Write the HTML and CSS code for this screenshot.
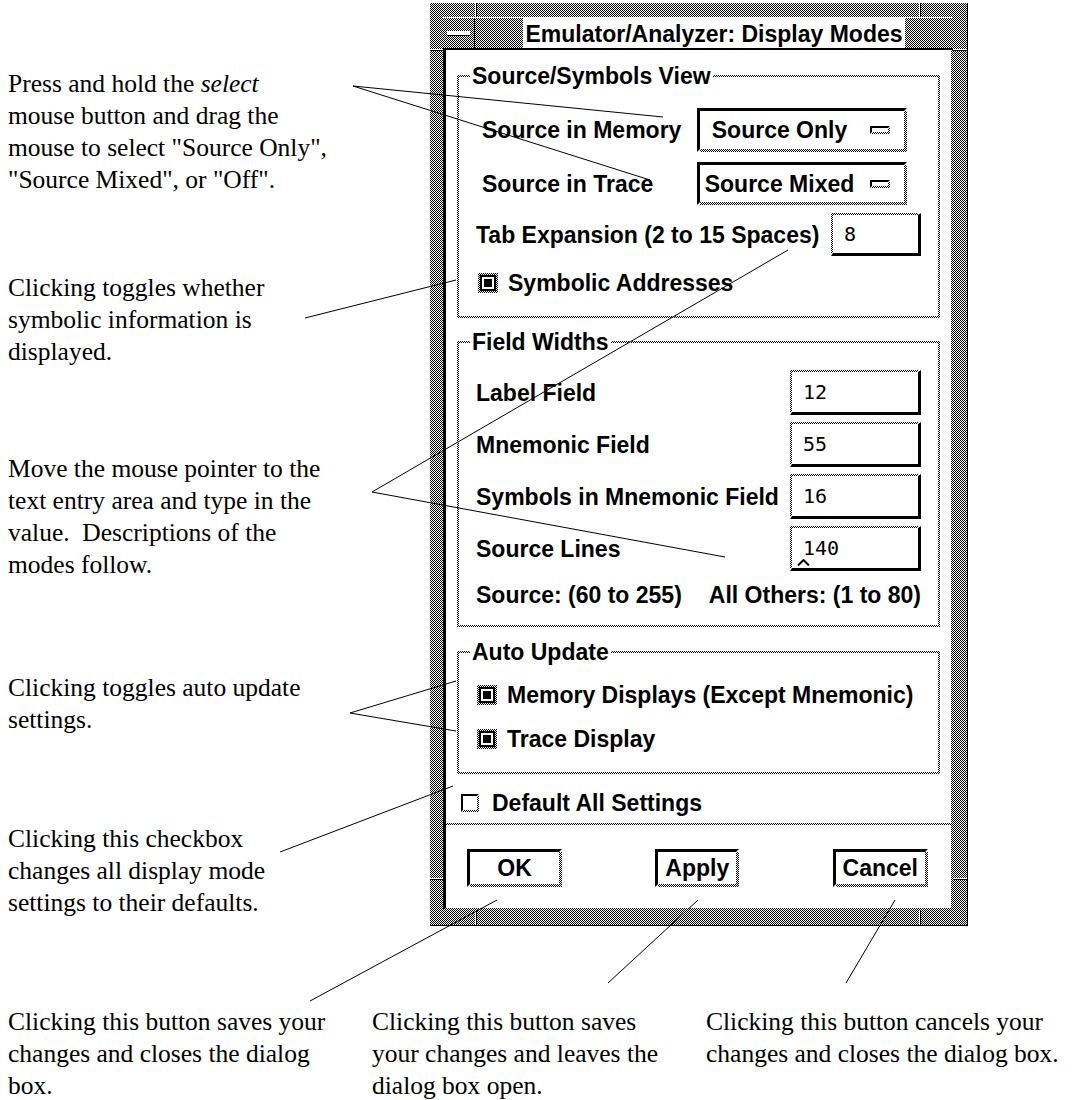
FILE: index.html
```html
<!DOCTYPE html>
<html>
  <head>
    <meta http-equiv="Content-Type" content="text/html; charset=utf-8">
    <title>Emulator/Analyzer: Display Modes</title>
    <link rel="stylesheet" href="styles.css">
  </head>
  <body>
    <div class="page">
      <p class="note note-select">Press and hold the <i>select</i><br>mouse button and drag the<br>mouse to select "Source Only",<br>"Source Mixed", or "Off".</p>
      <p class="note note-symbolic">Clicking toggles whether<br>symbolic information is<br>displayed.</p>
      <p class="note note-entry">Move the mouse pointer to the<br>text entry area and type in the<br>value.&nbsp; Descriptions of the<br>modes follow.</p>
      <p class="note note-auto">Clicking toggles auto update<br>settings.</p>
      <p class="note note-default">Clicking this checkbox<br>changes all display mode<br>settings to their defaults.</p>
      <p class="note note-ok">Clicking this button saves your<br>changes and closes the dialog<br>box.</p>
      <p class="note note-apply">Clicking this button saves<br>your changes and leaves the<br>dialog box open.</p>
      <p class="note note-cancel">Clicking this button cancels your<br>changes and closes the dialog box.</p>

      <div class="window">
        <span class="tick tick-top tick-l"></span><span class="tick tick-top tick-r"></span>
        <span class="tick tick-bottom tick-l"></span><span class="tick tick-bottom tick-r"></span>
        <span class="tick tick-side tick-left tick-t"></span><span class="tick tick-side tick-left tick-b"></span>
        <span class="tick tick-side tick-right tick-t"></span><span class="tick tick-side tick-right tick-b"></span>

        <div class="titlebar">
          <span class="menu-btn"><span class="menu-bar"></span></span>
          <span class="title-wrap"><span class="title">Emulator/Analyzer: Display Modes</span></span>
        </div>

        <div class="client">
          <div class="group g-source">
            <span class="group-title">Source/Symbols View</span>
            <div class="row opt-row r-mem">
              <span class="label">Source in Memory</span>
              <span class="option"><span class="opt-text">Source Only</span><i class="opt-ind"></i></span>
            </div>
            <div class="row opt-row r-trace">
              <span class="label">Source in Trace</span>
              <span class="option"><span class="opt-text">Source Mixed</span><i class="opt-ind"></i></span>
            </div>
            <div class="row r-tab">
              <span class="label">Tab Expansion (2 to 15 Spaces)</span>
              <span class="field field-tab">8</span>
            </div>
            <div class="row check-row r-sym">
              <span class="check"></span>
              <span class="label">Symbolic Addresses</span>
            </div>
          </div>

          <div class="group g-fields">
            <span class="group-title">Field Widths</span>
            <div class="row f-row">
              <span class="label">Label Field</span>
              <span class="field">12</span>
            </div>
            <div class="row f-row">
              <span class="label">Mnemonic Field</span>
              <span class="field">55</span>
            </div>
            <div class="row f-row">
              <span class="label">Symbols in Mnemonic Field</span>
              <span class="field">16</span>
            </div>
            <div class="row f-row">
              <span class="label">Source Lines</span>
              <span class="field">140<svg class="caret" width="13" height="7" viewBox="0 0 13 7"><polyline points="1,6.5 6.5,1 12,6.5" fill="none" stroke="#000" stroke-width="2"/></svg></span>
            </div>
            <div class="row limits">
              <span>Source: (60 to 255)</span>
              <span>All Others: (1 to 80)</span>
            </div>
          </div>

          <div class="group g-auto">
            <span class="group-title">Auto Update</span>
            <div class="row check-row">
              <span class="check"></span>
              <span class="label">Memory Displays (Except Mnemonic)</span>
            </div>
            <div class="row check-row r-trace-disp">
              <span class="check"></span>
              <span class="label">Trace Display</span>
            </div>
          </div>

          <div class="row check-row r-default">
            <span class="check off"></span>
            <span class="label">Default All Settings</span>
          </div>

          <div class="sep"></div>

          <div class="row buttons">
            <span class="btn btn-ok">OK</span>
            <span class="btn">Apply</span>
            <span class="btn">Cancel</span>
          </div>
        </div>
      </div>

      <svg class="leaders" width="1075" height="1100" viewBox="0 0 1075 1100">
        <line x1="353" y1="86" x2="663" y2="117"/>
        <line x1="353" y1="86" x2="650" y2="180"/>
        <line x1="305" y1="318" x2="456" y2="280"/>
        <line x1="372" y1="492" x2="788" y2="250"/>
        <line x1="372" y1="492" x2="725" y2="557"/>
        <line x1="350" y1="713" x2="456" y2="681"/>
        <line x1="350" y1="713" x2="456" y2="731"/>
        <line x1="280" y1="852" x2="453" y2="786"/>
        <line x1="310" y1="1001" x2="497" y2="900"/>
        <line x1="608" y1="983" x2="698" y2="900"/>
        <line x1="846" y1="983" x2="895" y2="900"/>
      </svg>
    </div>
  </body>
</html>
```

FILE: styles.css
```css
:root { --dots: repeating-conic-gradient(#000 0 25%, #fff 0 50%) 0 0 / 2px 2px; }
html, body { margin: 0; background: #fff; }
.page { position: relative; width: 1075px; height: 1100px; overflow: hidden; }

/* callout texts around the figure */
.note { position: absolute; margin: 0; font-family: "Liberation Serif", "Times New Roman", serif; font-size: 25.5px; line-height: 32px; white-space: nowrap; color: #000; }
.note-select { left: 8px; top: 68px; }
.note-symbolic { left: 8px; top: 272px; }
.note-entry { left: 8px; top: 453px; }
.note-auto { left: 8px; top: 672px; }
.note-default { left: 8px; top: 823px; }
.note-ok { left: 8px; top: 1006px; }
.note-apply { left: 372px; top: 1006px; }
.note-cancel { left: 706px; top: 1006px; }

.leaders { position: absolute; left: 0; top: 0; z-index: 2; pointer-events: none; }
.leaders line { stroke: #000; stroke-width: 1; }

/* the motif window */
.window { position: absolute; left: 430px; top: 3px; width: 538px; height: 923px; box-sizing: border-box; padding: 14px 14px 15px 13px; border-right: 1px solid #000; border-bottom: 1px solid #000; background: var(--dots); display: flex; flex-direction: column; font-family: "Liberation Sans", Arial, sans-serif; font-weight: bold; font-size: 23px; line-height: 26px; color: #000; }
.tick { position: absolute; background: #fff; }
.tick-top, .tick-bottom { width: 1px; box-shadow: 1px 0 #000; }
.tick-top { top: 0; height: 14px; }
.tick-bottom { bottom: 0; height: 15px; }
.tick-l { left: 45px; }
.tick-r { left: 489px; }
.tick-side { height: 1px; box-shadow: 0 1px #000; }
.tick-left { left: 0; width: 13px; }
.tick-right { right: 0; width: 14px; }
.tick-t { top: 46px; }
.tick-b { top: 875px; }

.titlebar { height: 33px; box-sizing: border-box; border-top: 1px solid #fff; border-bottom: 2px solid #000; display: flex; }
.menu-btn { width: 31px; border-right: 1px solid #000; display: flex; align-items: center; justify-content: center; }
.menu-bar { width: 23px; height: 4px; background: #fff; border-bottom: 1px solid #000; }
.title-wrap { flex: 1; display: flex; justify-content: center; }
.title { background: #fff; padding: 2px 2px 0; line-height: 28px; white-space: nowrap; }

.client { flex: 1; display: flex; flex-direction: column; border-style: solid; border-width: 0 2px 2px 3px; border-color: transparent transparent transparent #000; background: linear-gradient(#fff, #fff) padding-box, var(--dots) border-box; }

.group { position: relative; margin: 0 11px; border: 2px solid transparent; background: linear-gradient(#fff, #fff) padding-box, var(--dots) border-box; }
.group-title { position: absolute; top: -14px; left: 11px; padding: 0 2px; background: #fff; white-space: nowrap; }

.row { display: flex; align-items: center; justify-content: space-between; white-space: nowrap; }
.check-row { justify-content: flex-start; gap: 10px; height: 24px; }

.g-source { margin-top: 25px; padding: 31px 17px 21px; }
.r-mem { height: 44px; }
.r-trace { height: 43px; margin-top: 10px; }
.r-tab { height: 43px; margin-top: 8px; }
.r-sym { margin-top: 15px; padding-left: 2px; }
.opt-row .label { margin-left: 6px; }

.option { width: 210px; height: 100%; margin-right: 14px; box-sizing: border-box; display: flex; align-items: center; border-style: solid; border-width: 3px; border-color: #000 transparent transparent #000; background: linear-gradient(#fff, #fff) padding-box, var(--dots) border-box; }
.opt-text { flex: 1; text-align: center; padding-right: 11px; }
.opt-ind { width: 20px; height: 8px; margin-right: 14px; box-sizing: border-box; border-style: solid; border-width: 2px; border-color: #000 transparent transparent #000; background: linear-gradient(#fff, #fff) padding-box, var(--dots) border-box; }

.field { position: relative; width: 131px; height: 100%; box-sizing: border-box; display: flex; align-items: center; padding-left: 11px; border-style: solid; border-width: 2px 3px 3px 2px; border-color: transparent #000 #000 transparent; background: linear-gradient(#fff, #fff) padding-box, var(--dots) border-box; font-family: "DejaVu Sans Mono", "Liberation Mono", monospace; font-weight: normal; font-size: 20px; }
.field-tab { width: 90px; }
.caret { position: absolute; left: 5px; bottom: 2px; }

.g-fields { margin-top: 23px; padding: 27px 17px 18px; }
.f-row { height: 45px; }
.f-row + .f-row { margin-top: 7px; }
.limits { height: 24px; margin-top: 12px; }

.g-auto { margin-top: 24px; padding: 30px 17px 21px 18px; }
.r-trace-disp { margin-top: 20px; }

.check { width: 20px; height: 20px; flex: none; box-sizing: border-box; padding: 2px; background: var(--dots); }
.check::after { content: ""; display: block; height: 100%; box-sizing: border-box; border: 2px solid #000; background: #000; box-shadow: inset 0 0 0 2px #fff; }
.check.off { width: 18px; height: 18px; padding: 0; border-style: solid; border-width: 2px; border-color: #000 transparent transparent #000; background: linear-gradient(#fff, #fff) padding-box, var(--dots) border-box; }
.check.off::after { display: none; }

.r-default { margin: 17px 0 0 15px; gap: 13px; }
.sep { height: 2px; margin-top: 8px; background: var(--dots); }

.buttons { height: 38px; margin-top: 24px; padding: 0 23px 0 21px; }
.btn { height: 38px; box-sizing: border-box; padding: 0 7px; display: flex; align-items: center; justify-content: center; border-style: solid; border-width: 3px; border-color: #000 transparent transparent #000; background: linear-gradient(#fff, #fff) padding-box, var(--dots) border-box; }
.btn-ok { width: 95px; }
```
